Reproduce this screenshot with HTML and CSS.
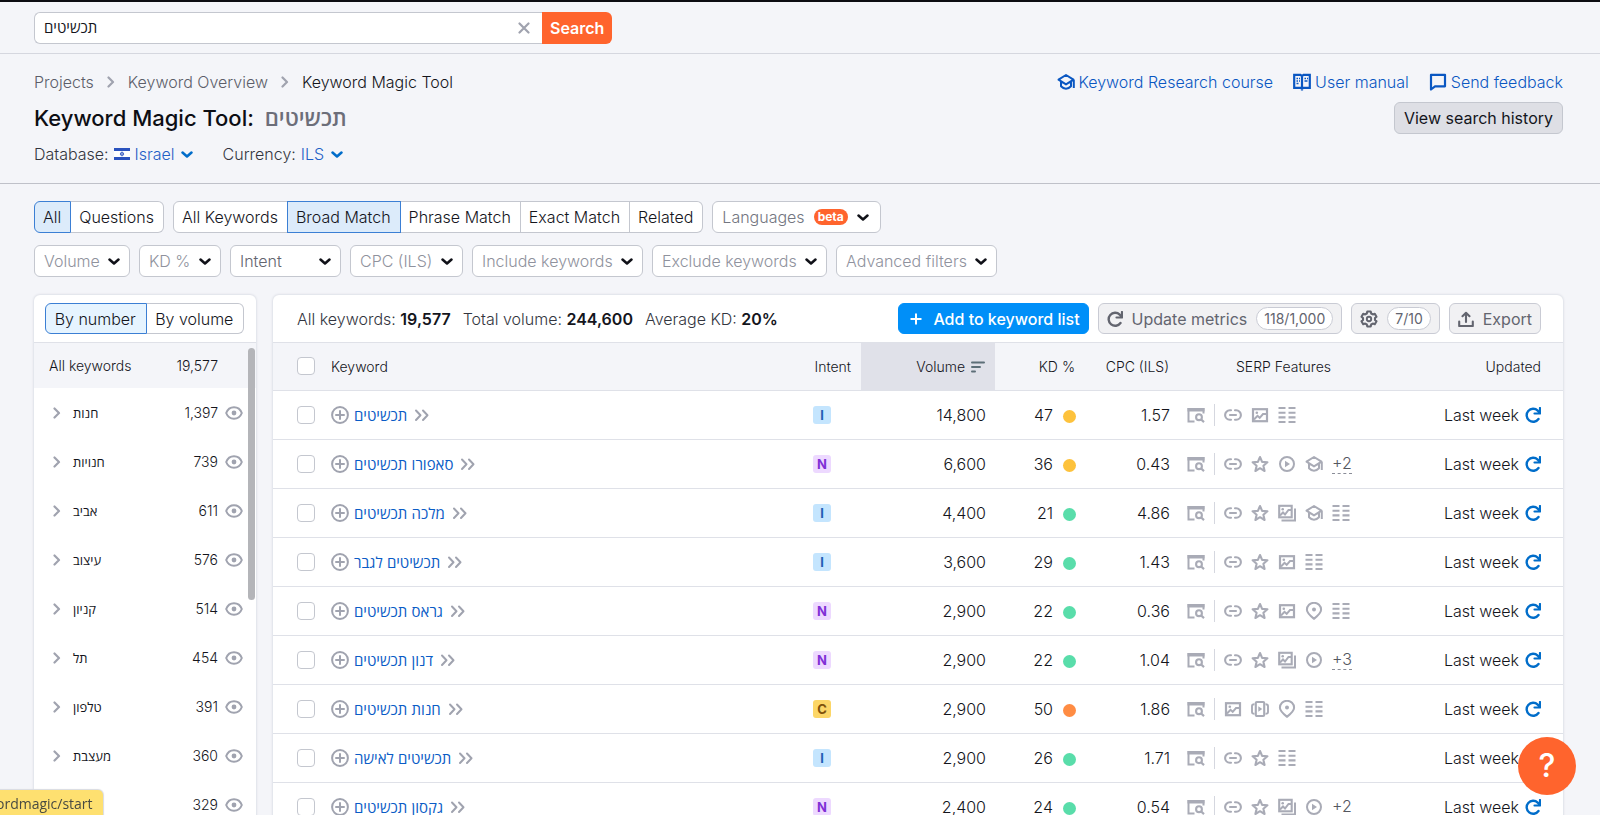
FILE: index.html
```html
<!DOCTYPE html>
<html lang="en">
<head>
<meta charset="utf-8">
<meta name="viewport" content="width=device-width, initial-scale=1">
<title>Keyword Magic Tool</title>
<link rel="stylesheet" href="styles.css">
</head>
<body>
<svg class="sprite" aria-hidden="true">
  <symbol id="chev-down" viewBox="0 0 12 12"><path d="M1.500 4.500l4.500 4 4.500-4" fill="none" stroke="currentColor" stroke-width="2.500" stroke-linecap="round" stroke-linejoin="round"/></symbol>
  <symbol id="chev-right" viewBox="0 0 12 12"><path d="M3.500 1.500L8 6l-4.500 4.500" fill="none" stroke="currentColor" stroke-width="2.200" stroke-linecap="round" stroke-linejoin="round"/></symbol>
  <symbol id="chev-double" viewBox="0 0 16 16"><path d="M2 3.500l4.500 4.700L2 13M9 3.500l4.500 4.700L9 13" fill="none" stroke="currentColor" stroke-width="2" stroke-linecap="round" stroke-linejoin="round"/></symbol>
  <symbol id="close" viewBox="0 0 12 12"><path d="M1.500 1.500l9 9M10.500 1.500l-9 9" fill="none" stroke="currentColor" stroke-width="2.200" stroke-linecap="round"/></symbol>
  <symbol id="cap" viewBox="0 0 18 18"><path d="M9 2l7.500 4.700L9 11.400 1.500 6.700zM4 8.500v4.800c1.500 1.600 3.100 2.400 5 2.400s3.500-.8 5-2.400V8.500M16.800 7v8" fill="none" stroke="currentColor" stroke-width="2" stroke-linejoin="round"/></symbol>
  <symbol id="book" viewBox="0 0 18 18"><path d="M1.200 1.800h6.300L9 3l1.500-1.200h6.300v13H10.500L9 15.800l-1.500-1H1.200zM9 3v14.500" fill="none" stroke="currentColor" stroke-width="2.200"/><path d="M3.500 5.500h1.500M6 5.500h1M3.500 8h1.500M6 8h1M3.500 10.500h2M11.500 5.500h1.500M14 5.500h1M11.500 8h3" fill="none" stroke="currentColor" stroke-width="1.400"/></symbol>
  <symbol id="chat" viewBox="0 0 18 18"><path d="M2 1.800h14v11.500H6L2 16.500z" fill="none" stroke="currentColor" stroke-width="2.200" stroke-linejoin="round"/></symbol>
  <symbol id="plus" viewBox="0 0 14 14"><path d="M7 1.500v11M1.500 7h11" fill="none" stroke="currentColor" stroke-width="2"/></symbol>
  <symbol id="refresh" viewBox="0 0 16 16"><path d="M13.500 12A6.500 6.500 0 1 1 12.700 3.600L14 5.200" fill="none" stroke="currentColor" stroke-width="2.400" stroke-linecap="round"/><path d="M15 1v5.500H9.500" fill="none" stroke="currentColor" stroke-width="2.200" stroke-linecap="round" stroke-linejoin="round"/></symbol>
  <symbol id="gear" viewBox="0 0 18 18"><path d="M7.300 1.500h3.400l.5 2 1.600.9 2-.6 1.700 2.900-1.500 1.400v1.800l1.500 1.400-1.700 2.900-2-.6-1.600.9-.5 2H7.300l-.5-2-1.600-.9-2 .6-1.700-2.900L3 9.900V8.100L1.500 6.700l1.700-2.900 2 .6 1.600-.9z" fill="none" stroke="currentColor" stroke-width="2.100" stroke-linejoin="round"/><circle cx="9" cy="9" r="2.200" fill="none" stroke="currentColor" stroke-width="1.900"/></symbol>
  <symbol id="export" viewBox="0 0 16 16"><path d="M8 11V2M4.500 5.200L8 1.800l3.500 3.400M1.200 10.500V15h13.600v-4.500" fill="none" stroke="currentColor" stroke-width="2.100" stroke-linecap="round" stroke-linejoin="round"/></symbol>
  <symbol id="sort" viewBox="0 0 14 12"><path d="M1 1.500h12M1 6h8M1 10.500h3" fill="none" stroke="currentColor" stroke-width="2" stroke-linecap="round"/></symbol>
  <symbol id="eye" viewBox="0 0 18 14"><path d="M1.200 7C2.600 3.200 5.600 1.200 9 1.200S15.400 3.200 16.800 7c-1.400 3.800-4.400 5.800-7.800 5.800S2.600 10.800 1.200 7z" fill="none" stroke="currentColor" stroke-width="2"/><circle cx="9" cy="7" r="2.400" fill="currentColor"/></symbol>
  <symbol id="add" viewBox="0 0 18 18"><circle cx="9" cy="9" r="7.900" fill="none" stroke="currentColor" stroke-width="2"/><path d="M9 5v8M5 9h8" fill="none" stroke="currentColor" stroke-width="2" stroke-linecap="round"/></symbol>
  <symbol id="serp" viewBox="0 0 18 18"><path d="M.5 2h17v3.500H.5z" fill="currentColor"/><path d="M7.500 15.500h-6V3h15v4.500" fill="none" stroke="currentColor" stroke-width="2"/><circle cx="12" cy="11.200" r="2.900" fill="none" stroke="currentColor" stroke-width="2.100"/><path d="M14.200 13.500l2.800 2.600" stroke="currentColor" stroke-width="2.200"/></symbol>
  <symbol id="link" viewBox="0 0 18 18"><path d="M7 4.300H5.800a4.700 4.700 0 0 0 0 9.400H7M11 4.300h1.200a4.700 4.700 0 0 1 0 9.400H11M6 9h6" fill="none" stroke="currentColor" stroke-width="2.100" stroke-linecap="round"/></symbol>
  <symbol id="star" viewBox="0 0 18 18"><path d="M9 2l2.100 4.900 5.300.4-4 3.500 1.200 5.200L9 13.200 4.400 16l1.200-5.200-4-3.500 5.300-.4z" fill="none" stroke="currentColor" stroke-width="2.100" stroke-linejoin="round"/></symbol>
  <symbol id="image" viewBox="0 0 18 18"><rect x="2" y="3.200" width="14" height="12" fill="none" stroke="currentColor" stroke-width="2.200"/><path d="M3 13.500l3.500-3.700 2.200 2L12 8h3.500" fill="none" stroke="currentColor" stroke-width="2"/><circle cx="5.800" cy="6.800" r="1.300" fill="currentColor"/></symbol>
  <symbol id="images" viewBox="0 0 18 18"><rect x="1.200" y="1.800" width="12.500" height="11.500" fill="none" stroke="currentColor" stroke-width="2.100"/><path d="M2 11.500l3-3 2 2L10.500 6H13" fill="none" stroke="currentColor" stroke-width="2"/><circle cx="4.700" cy="5.200" r="1.300" fill="currentColor"/><path d="M17 4.500V16.500H3.500" fill="none" stroke="currentColor" stroke-width="2"/></symbol>
  <symbol id="list" viewBox="0 0 18 18"><path d="M.5 2h7M.5 6.700h7M.5 11.400h7M.5 16h7M10.500 2h7M10.500 6.700h7M10.500 11.400h7M10.500 16h7" fill="none" stroke="currentColor" stroke-width="2.100"/></symbol>
  <symbol id="play" viewBox="0 0 18 18"><circle cx="9" cy="9" r="7" fill="none" stroke="currentColor" stroke-width="2"/><path d="M7 5.800l5 3.200-5 3.200z" fill="currentColor"/></symbol>
  <symbol id="carousel" viewBox="0 0 18 18"><rect x="4.800" y="2" width="8.400" height="14" rx="1" fill="none" stroke="currentColor" stroke-width="2.100"/><path d="M3.500 4.200c-1.700 0-2.500.5-2.500 1.800v6c0 1.300.8 1.800 2.500 1.800M14.500 4.200c1.700 0 2.500.5 2.500 1.800v6c0 1.300-.8 1.800-2.500 1.800" fill="none" stroke="currentColor" stroke-width="1.900"/><path d="M7.300 6.300l4 2.700-4 2.700z" fill="currentColor"/></symbol>
  <symbol id="pin" viewBox="0 0 18 18"><path d="M9 16.800C5 13.500 1.900 11 1.900 7.700a7.100 6.900 0 0 1 14.200 0C16.100 11 13 13.500 9 16.800z" fill="none" stroke="currentColor" stroke-width="2"/><circle cx="9" cy="7.600" r="2" fill="currentColor"/></symbol>
</svg>

<div class="app">
  <form class="topbar" role="search">
    <div class="searchbox">
      <input class="search-input" type="text" value="תכשיטים" aria-label="Keyword">
      <button class="clear" type="button" aria-label="Clear"><svg class="i12"><use href="#close"/></svg></button>
    </div>
    <button class="search-btn" type="submit">Search</button>
  </form>

  <header class="head">
    <div class="head-row">
      <nav class="crumbs" aria-label="Breadcrumb">
        <a href="#">Projects</a><svg class="i12"><use href="#chev-right"/></svg>
        <a href="#">Keyword Overview</a><svg class="i12"><use href="#chev-right"/></svg>
        <span class="current">Keyword Magic Tool</span>
      </nav>
      <nav class="help-links" aria-label="Help">
        <a href="#"><svg class="i18"><use href="#cap"/></svg>Keyword Research course</a>
        <a href="#"><svg class="i18"><use href="#book"/></svg>User manual</a>
        <a href="#"><svg class="i18"><use href="#chat"/></svg>Send feedback</a>
      </nav>
    </div>
    <div class="head-row title-row">
      <h1>Keyword Magic Tool: <bdi class="query">תכשיטים</bdi></h1>
      <button class="history" type="button">View search history</button>
    </div>
    <div class="settings">
      <div class="setting"><label for="db">Database:</label>
        <svg class="flag" viewBox="0 0 16 12"><path fill="#fff" d="M0 0h16v12H0z"/><path fill="#2a52be" d="M0 0h16v3H0zM0 9h16v3H0z"/><path d="M8 3.700l1.800 3.200H6.200zM8 8.200L6.200 5h3.600z" fill="none" stroke="#2a52be" stroke-width=".7"/></svg>
        <span class="pick plain"><select id="db"><option>Israel</option></select><svg class="i12"><use href="#chev-down"/></svg></span></div>
      <div class="setting"><label for="cur">Currency:</label>
        <span class="pick plain"><select id="cur"><option>ILS</option></select><svg class="i12"><use href="#chev-down"/></svg></span></div>
    </div>
  </header>

  <main class="main">
    <div class="filters">
      <div class="filter-row">
        <div class="group"><button class="on" type="button">All</button><button type="button">Questions</button></div>
        <div class="group"><button type="button">All Keywords</button><button class="on" type="button">Broad Match</button><button type="button">Phrase Match</button><button type="button">Exact Match</button><button type="button">Related</button></div>
        <button class="languages" type="button" aria-haspopup="listbox">Languages <span class="beta">beta</span><svg class="i12"><use href="#chev-down"/></svg></button>
      </div>
      <div class="filter-row">
        <span class="pick"><select aria-label="Volume"><option>Volume</option></select><svg class="i12"><use href="#chev-down"/></svg></span>
        <span class="pick"><select aria-label="KD %"><option>KD %</option></select><svg class="i12"><use href="#chev-down"/></svg></span>
        <span class="pick wide"><select aria-label="Intent"><option>Intent</option></select><svg class="i12"><use href="#chev-down"/></svg></span>
        <span class="pick"><select aria-label="CPC (ILS)"><option>CPC (ILS)</option></select><svg class="i12"><use href="#chev-down"/></svg></span>
        <span class="pick"><select aria-label="Include keywords"><option>Include keywords</option></select><svg class="i12"><use href="#chev-down"/></svg></span>
        <span class="pick"><select aria-label="Exclude keywords"><option>Exclude keywords</option></select><svg class="i12"><use href="#chev-down"/></svg></span>
        <span class="pick"><select aria-label="Advanced filters"><option>Advanced filters</option></select><svg class="i12"><use href="#chev-down"/></svg></span>
      </div>
    </div>

    <div class="columns">
      <aside class="panel groups">
        <div class="panel-bar side-bar"><div class="group fill"><button class="on" type="button">By number</button><button type="button">By volume</button></div></div>
        <div class="side-scroll">
          <div class="side-all"><span>All keywords</span><span class="count">19,577</span></div>
          <ul class="side-list">
            <li><svg class="i12"><use href="#chev-right"/></svg><bdi>חנות</bdi><span class="count">1,397</span><svg class="eye"><use href="#eye"/></svg></li>
            <li><svg class="i12"><use href="#chev-right"/></svg><bdi>חנויות</bdi><span class="count">739</span><svg class="eye"><use href="#eye"/></svg></li>
            <li><svg class="i12"><use href="#chev-right"/></svg><bdi>אביב</bdi><span class="count">611</span><svg class="eye"><use href="#eye"/></svg></li>
            <li><svg class="i12"><use href="#chev-right"/></svg><bdi>עיצוב</bdi><span class="count">576</span><svg class="eye"><use href="#eye"/></svg></li>
            <li><svg class="i12"><use href="#chev-right"/></svg><bdi>קניון</bdi><span class="count">514</span><svg class="eye"><use href="#eye"/></svg></li>
            <li><svg class="i12"><use href="#chev-right"/></svg><bdi>תל</bdi><span class="count">454</span><svg class="eye"><use href="#eye"/></svg></li>
            <li><svg class="i12"><use href="#chev-right"/></svg><bdi>טלפון</bdi><span class="count">391</span><svg class="eye"><use href="#eye"/></svg></li>
            <li><svg class="i12"><use href="#chev-right"/></svg><bdi>מעצבת</bdi><span class="count">360</span><svg class="eye"><use href="#eye"/></svg></li>
            <li><svg class="i12"><use href="#chev-right"/></svg><bdi></bdi><span class="count">329</span><svg class="eye"><use href="#eye"/></svg></li>
          </ul>
          <span class="thumb"></span>
        </div>
      </aside>

      <section class="panel results">
        <div class="panel-bar">
          <p class="totals"><span>All keywords: <b>19,577</b></span><span>Total volume: <b>244,600</b></span><span>Average KD: <b>20%</b></span></p>
          <div class="actions">
            <button class="btn primary" type="button"><svg class="i14"><use href="#plus"/></svg>Add to keyword list</button>
            <button class="btn" type="button"><svg class="i16"><use href="#refresh"/></svg>Update metrics<span class="pill">118/1,000</span></button>
            <button class="btn" type="button" aria-label="Columns 7/10"><svg class="i18"><use href="#gear"/></svg><span class="pill">7/10</span></button>
            <button class="btn" type="button"><svg class="i16"><use href="#export"/></svg>Export</button>
          </div>
        </div>
        <table class="grid">
          <colgroup><col class="c-check"><col><col class="c-intent"><col class="c-vol"><col class="c-kd"><col class="c-cpc"><col class="c-serp"><col class="c-upd"></colgroup>
          <thead><tr><th class="check"><input type="checkbox" aria-label="Select all"></th><th class="left">Keyword</th><th>Intent</th><th class="sorted">Volume <svg class="sort"><use href="#sort"/></svg></th><th>KD %</th><th>CPC (ILS)</th><th class="serp-head">SERP Features</th><th class="upd">Updated</th></tr></thead>
          <tbody>
            <tr><td class="check"><input type="checkbox" aria-label="Select"></td><td class="left"><span class="kw"><svg class="i18"><use href="#add"/></svg><a href="#"><bdi>תכשיטים</bdi></a><svg class="i16"><use href="#chev-double"/></svg></span></td><td class="left int"><span class="tag i">I</span></td><td>14,800</td><td>47<i class="dot amber"></i></td><td>1.57</td><td class="left serp"><span class="feats"><svg><use href="#serp"/></svg><i class="bar"></i><svg><use href="#link"/></svg><svg><use href="#image"/></svg><svg><use href="#list"/></svg></span></td><td class="upd"><span class="when">Last week<svg class="i16"><use href="#refresh"/></svg></span></td></tr>
            <tr><td class="check"><input type="checkbox" aria-label="Select"></td><td class="left"><span class="kw"><svg class="i18"><use href="#add"/></svg><a href="#"><bdi>סאפורו תכשיטים</bdi></a><svg class="i16"><use href="#chev-double"/></svg></span></td><td class="left int"><span class="tag n">N</span></td><td>6,600</td><td>36<i class="dot amber"></i></td><td>0.43</td><td class="left serp"><span class="feats"><svg><use href="#serp"/></svg><i class="bar"></i><svg><use href="#link"/></svg><svg><use href="#star"/></svg><svg><use href="#play"/></svg><svg><use href="#cap"/></svg><span class="more">+2</span></span></td><td class="upd"><span class="when">Last week<svg class="i16"><use href="#refresh"/></svg></span></td></tr>
            <tr><td class="check"><input type="checkbox" aria-label="Select"></td><td class="left"><span class="kw"><svg class="i18"><use href="#add"/></svg><a href="#"><bdi>מלכה תכשיטים</bdi></a><svg class="i16"><use href="#chev-double"/></svg></span></td><td class="left int"><span class="tag i">I</span></td><td>4,400</td><td>21<i class="dot green"></i></td><td>4.86</td><td class="left serp"><span class="feats"><svg><use href="#serp"/></svg><i class="bar"></i><svg><use href="#link"/></svg><svg><use href="#star"/></svg><svg><use href="#images"/></svg><svg><use href="#cap"/></svg><svg><use href="#list"/></svg></span></td><td class="upd"><span class="when">Last week<svg class="i16"><use href="#refresh"/></svg></span></td></tr>
            <tr><td class="check"><input type="checkbox" aria-label="Select"></td><td class="left"><span class="kw"><svg class="i18"><use href="#add"/></svg><a href="#"><bdi>תכשיטים לגבר</bdi></a><svg class="i16"><use href="#chev-double"/></svg></span></td><td class="left int"><span class="tag i">I</span></td><td>3,600</td><td>29<i class="dot green"></i></td><td>1.43</td><td class="left serp"><span class="feats"><svg><use href="#serp"/></svg><i class="bar"></i><svg><use href="#link"/></svg><svg><use href="#star"/></svg><svg><use href="#image"/></svg><svg><use href="#list"/></svg></span></td><td class="upd"><span class="when">Last week<svg class="i16"><use href="#refresh"/></svg></span></td></tr>
            <tr><td class="check"><input type="checkbox" aria-label="Select"></td><td class="left"><span class="kw"><svg class="i18"><use href="#add"/></svg><a href="#"><bdi>גראס תכשיטים</bdi></a><svg class="i16"><use href="#chev-double"/></svg></span></td><td class="left int"><span class="tag n">N</span></td><td>2,900</td><td>22<i class="dot green"></i></td><td>0.36</td><td class="left serp"><span class="feats"><svg><use href="#serp"/></svg><i class="bar"></i><svg><use href="#link"/></svg><svg><use href="#star"/></svg><svg><use href="#image"/></svg><svg><use href="#pin"/></svg><svg><use href="#list"/></svg></span></td><td class="upd"><span class="when">Last week<svg class="i16"><use href="#refresh"/></svg></span></td></tr>
            <tr><td class="check"><input type="checkbox" aria-label="Select"></td><td class="left"><span class="kw"><svg class="i18"><use href="#add"/></svg><a href="#"><bdi>דנון תכשיטים</bdi></a><svg class="i16"><use href="#chev-double"/></svg></span></td><td class="left int"><span class="tag n">N</span></td><td>2,900</td><td>22<i class="dot green"></i></td><td>1.04</td><td class="left serp"><span class="feats"><svg><use href="#serp"/></svg><i class="bar"></i><svg><use href="#link"/></svg><svg><use href="#star"/></svg><svg><use href="#images"/></svg><svg><use href="#play"/></svg><span class="more">+3</span></span></td><td class="upd"><span class="when">Last week<svg class="i16"><use href="#refresh"/></svg></span></td></tr>
            <tr><td class="check"><input type="checkbox" aria-label="Select"></td><td class="left"><span class="kw"><svg class="i18"><use href="#add"/></svg><a href="#"><bdi>חנות תכשיטים</bdi></a><svg class="i16"><use href="#chev-double"/></svg></span></td><td class="left int"><span class="tag c">C</span></td><td>2,900</td><td>50<i class="dot orange"></i></td><td>1.86</td><td class="left serp"><span class="feats"><svg><use href="#serp"/></svg><i class="bar"></i><svg><use href="#image"/></svg><svg><use href="#carousel"/></svg><svg><use href="#pin"/></svg><svg><use href="#list"/></svg></span></td><td class="upd"><span class="when">Last week<svg class="i16"><use href="#refresh"/></svg></span></td></tr>
            <tr><td class="check"><input type="checkbox" aria-label="Select"></td><td class="left"><span class="kw"><svg class="i18"><use href="#add"/></svg><a href="#"><bdi>תכשיטים לאישה</bdi></a><svg class="i16"><use href="#chev-double"/></svg></span></td><td class="left int"><span class="tag i">I</span></td><td>2,900</td><td>26<i class="dot green"></i></td><td>1.71</td><td class="left serp"><span class="feats"><svg><use href="#serp"/></svg><i class="bar"></i><svg><use href="#link"/></svg><svg><use href="#star"/></svg><svg><use href="#list"/></svg></span></td><td class="upd"><span class="when">Last week<svg class="i16"><use href="#refresh"/></svg></span></td></tr>
            <tr><td class="check"><input type="checkbox" aria-label="Select"></td><td class="left"><span class="kw"><svg class="i18"><use href="#add"/></svg><a href="#"><bdi>גקסון תכשיטים</bdi></a><svg class="i16"><use href="#chev-double"/></svg></span></td><td class="left int"><span class="tag n">N</span></td><td>2,400</td><td>24<i class="dot green"></i></td><td>0.54</td><td class="left serp"><span class="feats"><svg><use href="#serp"/></svg><i class="bar"></i><svg><use href="#link"/></svg><svg><use href="#star"/></svg><svg><use href="#images"/></svg><svg><use href="#play"/></svg><span class="more">+2</span></span></td><td class="upd"><span class="when">Last week<svg class="i16"><use href="#refresh"/></svg></span></td></tr>
          </tbody>
        </table>
      </section>
    </div>
  </main>
</div>
<div class="status">ordmagic/start</div>
<button class="help" type="button" aria-label="Help">?</button>
</body>
</html>
```

FILE: styles.css
```css
* { box-sizing: border-box; }
body {
  margin: 0;
  background: #f4f5f9;
  color: #14151c;
  font: 300 16px/24px Inter, "Open Sans", "Liberation Sans", sans-serif;
}
button, input, select { font: inherit; color: inherit; margin: 0; }
button { cursor: pointer; }
a { color: inherit; text-decoration: none; }
svg { flex: none; display: block; overflow: visible; }
.sprite { position: absolute; width: 0; height: 0; }
.i12 { width: 12px; height: 12px; }
.i14 { width: 14px; height: 14px; }
.i16 { width: 16px; height: 16px; }
.i18 { width: 18px; height: 18px; }

.app { height: 100vh; overflow: hidden; border-top: 2px solid #0c0d12; }

.topbar {
  display: flex;
  padding: 10px 34px 9px;
  border-bottom: 1px solid #d5d7df;
}
.searchbox {
  display: flex;
  align-items: center;
  width: 508px;
  height: 32px;
  background: #fff;
  border: 1px solid #c4c7cf;
  border-right: 0;
  border-radius: 6px 0 0 6px;
}
.search-input { flex: 1; min-width: 0; padding: 0 9px; border: 0; background: none; outline: 0; font-size: 15px; font-weight: 400; }
.clear { padding: 0 12px; border: 0; background: none; color: #a0a3af; }
.search-btn {
  height: 32px;
  padding: 0 8px;
  border: 0;
  border-radius: 0 6px 6px 0;
  background: #ff642d;
  color: #fff;
  font-weight: 600;
}

.head { padding: 16px 37px 17px 34px; border-bottom: 1px solid #bfc1c9; }
.head-row { display: flex; align-items: center; justify-content: space-between; }
.crumbs { display: flex; align-items: center; gap: 11px; color: #5c5e69; }
.crumbs svg { color: #a0a3af; }
.crumbs .current { color: #14151c; }
.help-links { display: flex; gap: 20px; color: #0a57c2; }
.help-links a { display: flex; align-items: center; gap: 4px; }
.title-row { padding: 8px 0; }
h1 { margin: 0; font-size: 22px; line-height: 32px; font-weight: 500; color: #0d0e14; }
.query { color: #6c6e79; font-weight: 600; margin-left: 5px; }
.history {
  height: 32px;
  padding: 0 9px;
  border: 1px solid #c4c7cf;
  border-radius: 6px;
  background: #dedfe5;
  font-weight: 400;
}
.settings { display: flex; gap: 30px; }
.setting { display: flex; align-items: center; gap: 5px; color: #33353e; }
.flag { width: 16px; height: 12px; }

.pick { display: inline-grid; align-items: center; }
.pick select, .pick svg { grid-area: 1 / 1; }
.pick svg { justify-self: end; margin-right: 10px; pointer-events: none; color: #101118; }
.pick select {
  appearance: none;
  height: 32px;
  padding: 0 29px 0 9px;
  border: 1px solid #c4c7cf;
  border-radius: 6px;
  background: #fff;
  color: #8f929d;
}
.pick.wide select { padding-right: 58px; color: #63656f; }
.pick.plain select { height: 24px; padding: 0 18px 0 0; border: 0; background: none; color: #1f60c6; }
.pick.plain svg { margin: 0; color: #006dca; }

.main { padding: 17px 37px 0 34px; }
.filters { display: grid; gap: 12px; }
.filter-row { display: flex; gap: 9px; }
.group { display: flex; height: 32px; }
.group button {
  padding: 0 9px 0 8px;
  border: 1px solid #c4c7cf;
  border-left-width: 0;
  background: #fff;
  white-space: nowrap;
}
.group button:first-child { border-left-width: 1px; border-radius: 6px 0 0 6px; }
.group button:last-child { border-radius: 0 6px 6px 0; }
.group .on { background: #dcebfa; border-color: #3b7fd4; box-shadow: -1px 0 #3b7fd4; }
.group .on:first-child { box-shadow: none; }
.languages {
  display: flex;
  align-items: center;
  gap: 9px;
  height: 32px;
  padding: 0 11px 0 9px;
  border: 1px solid #c4c7cf;
  border-radius: 6px;
  background: #fff;
  color: #737681;
}
.languages svg { color: #101118; }
.beta {
  padding: 0 4px;
  border-radius: 8px;
  background: #ff642d;
  color: #fff;
  font-size: 12px;
  line-height: 16px;
  font-weight: 700;
}

.columns { display: flex; align-items: flex-start; gap: 17px; padding-top: 18px; }
.panel { background: #fff; border-radius: 6px; box-shadow: 0 0 2px 1px #dfe1e8; overflow: hidden; }
.groups { flex: none; width: 222px; }
.results { flex: 1; min-width: 0; }
.panel-bar {
  display: flex;
  align-items: center;
  justify-content: space-between;
  height: 48px;
  padding: 0 22px 0 24px;
  border-bottom: 1px solid #dfe1e8;
}
.side-bar { padding: 0 12px 0 11px; }
.side-bar .group { height: 31px; flex: 1; }
.fill button { flex: auto; }
.side-bar .on { background: #e6f4ff; }

.side-scroll { position: relative; font-size: 14px; }
.thumb { position: absolute; top: 5px; right: 1px; width: 7px; height: 252px; border-radius: 4px; background: #b4b5b9; }
.side-all { display: flex; justify-content: space-between; align-items: center; height: 45px; padding: 0 38px 0 15px; background: #f4f5f9; }
.side-list { list-style: none; margin: 0; padding: 0; }
.side-list li { display: flex; align-items: center; height: 49px; padding: 0 13px 0 17px; }
.side-list bdi { flex: 1; padding-left: 10px; text-align: left; font-size: 13px; font-weight: 400; }
.side-list svg { color: #a0a3af; }
.count { font-size: 14px; }
.eye { width: 18px; height: 14px; margin-left: 7px; }

.totals { display: flex; gap: 12px; margin: 0; white-space: nowrap; color: #33353e; }
.totals b { font-weight: 600; color: #14151c; }
.actions { display: flex; gap: 9px; }
.btn {
  display: flex;
  align-items: center;
  gap: 9px;
  height: 31px;
  padding: 0 8px;
  border: 1px solid #c9cbd4;
  border-radius: 6px;
  background: #f1f1f3;
  color: #63656f;
  font-weight: 400;
  white-space: nowrap;
}
.primary { gap: 10px; padding: 0 8px 0 10px; border-color: #008ff8; background: #008ff8; color: #fff; font-weight: 500; }
.pill { padding: 0 7px; border: 1px solid #c9cbd4; border-radius: 12px; background: #fff; font-size: 14px; line-height: 21px; font-weight: 400; }

.grid { width: 100%; border-collapse: collapse; table-layout: fixed; }
.c-check { width: 58px; }
.c-intent { width: 64px; }
.c-vol { width: 134px; }
.c-kd { width: 90px; }
.c-cpc { width: 94px; }
.c-serp { width: 212px; }
.c-upd { width: 172px; }
th { height: 47px; padding: 2px 10px 0 0; background: #f4f5f9; border-bottom: 1px solid #dfe1e8; font-size: 14px; font-weight: 300; text-align: right; white-space: nowrap; }
td { height: 49px; padding: 0 9px 0 0; border-bottom: 1px solid #dfe1e8; text-align: right; white-space: nowrap; }
.left { text-align: left; }
.grid .check { padding: 0 0 0 24px; text-align: left; }
.grid .int { padding-left: 16px; }
.grid .serp { padding-left: 8px; }
.grid .serp-head { padding-left: 57px; text-align: left; }
.grid .upd { padding-right: 22px; }
.grid .sorted { background: #e0e1e9; }
.sort { display: inline-block; width: 14px; height: 12px; margin-left: 2px; vertical-align: -1px; color: #5d6f78; }
.grid input {
  appearance: none;
  display: block;
  width: 18px;
  height: 18px;
  border: 1px solid #c4c7cf;
  border-radius: 4px;
  background: #fff;
}
.kw { display: inline-flex; align-items: center; gap: 5px; vertical-align: middle; color: #a0a3af; }
.kw a { padding-right: 2px; color: #0a5cc6; }
.kw bdi { font-size: 15px; font-weight: 400; }
.tag { display: block; width: 18px; height: 18px; border-radius: 3px; font-size: 13px; line-height: 18px; font-weight: 700; text-align: center; }
.tag.i { background: #c4e5fe; color: #2160b5; }
.tag.n { background: #edd9ff; color: #8030d6; }
.tag.c { background: #fcd667; color: #80510a; }
.dot { display: inline-block; width: 13px; height: 13px; margin-left: 10px; border-radius: 50%; vertical-align: -2px; }
.amber { background: #fdc23c; }
.green { background: #59ddaa; }
.orange { background: #ff8c43; }
.feats { display: flex; align-items: center; gap: 9px; color: #a9abb6; }
.feats svg { width: 18px; height: 18px; }
.bar { width: 1px; height: 22px; background: #d5d7df; }
.more { border-bottom: 1px dashed #8a8d98; color: #55575f; line-height: 20px; }
.when { display: inline-flex; align-items: center; gap: 6px; vertical-align: middle; }
.when svg { color: #006dca; }

.status {
  position: fixed;
  left: -4px;
  bottom: 0;
  padding: 2px 10px 0 0;
  border-radius: 0 5px 0 0;
  background: #fee070;
  box-shadow: 0 0 1px 1px #d9dbe0;
  color: #484a42;
  font: 400 14px/23px "Open Sans", sans-serif;
}
.help {
  position: fixed;
  right: 24px;
  bottom: 20px;
  width: 58px;
  height: 58px;
  padding: 0;
  border: 0;
  border-radius: 50%;
  background: #ff642d;
  color: #fff;
  font-size: 32px;
  line-height: 58px;
  font-weight: 500;
}
```
